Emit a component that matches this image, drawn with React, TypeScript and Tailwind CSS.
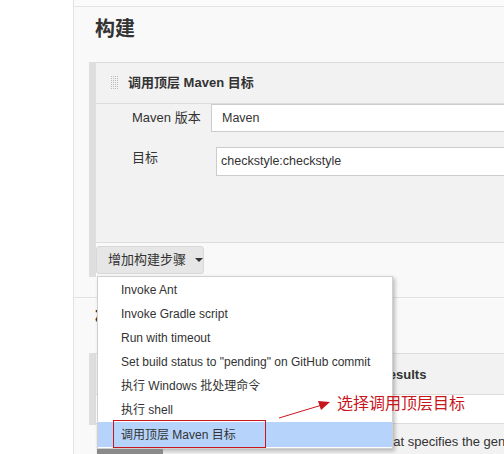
import React from "react";

const font = { fontFamily: '"Liberation Sans", Arial, "Noto Sans CJK SC", sans-serif' };

const menuItems = [
  "Invoke Ant",
  "Invoke Gradle script",
  "Run with timeout",
  'Set build status to "pending" on GitHub commit',
  "执行 Windows 批处理命令",
  "执行 shell",
  "调用顶层 Maven 目标",
];

function Grip() {
  return (
    <svg width="9" height="14" viewBox="0 0 9 14" className="shrink-0">
      {[0, 1, 2, 3, 4, 5, 6].map((r) =>
        [0, 1, 2, 3].map((c) => (
          <rect key={`${r}-${c}`} x={c * 2 + 1} y={r * 2} width="1" height="1" fill="#bbb" />
        ))
      )}
    </svg>
  );
}

export default function App() {
  return (
    <div
      className="relative w-[504px] h-[454px] overflow-hidden bg-white text-[13px] text-[#333]"
      style={font}
    >
      <div className="flex h-full">
        {/* left empty column */}
        <div className="w-[73px] shrink-0 bg-white" />

        {/* main panel */}
        <div className="flex-1 border-l border-[#e2e2e2] bg-[#f9f9f9] flex flex-col overflow-hidden">
          <div className="shrink-0 h-[7px] bg-[#fbfbfb] border-b border-[#e4e4e4]" />

          {/* 构建 */}
          <div className="shrink-0 pl-[21px] pt-[9px] h-[55px]">
            <h2 className="text-[20px] font-bold leading-[26px] text-[#333]">构建</h2>
          </div>

          {/* build step */}
          <div className="shrink-0 flex pl-[15px]">
            <div className="w-[7px] bg-[#dedede] shrink-0" />
            <div className="flex-1">
              <div className="h-[181px] bg-[#f2f2f2] border-t border-b border-[#dcdcdc]">
                <div className="h-[41px] flex items-center gap-[9px] pl-[14px] border-b border-[#dcdcdc]">
                  <Grip />
                  <span className="font-bold text-[13px]">调用顶层 Maven 目标</span>
                </div>
                <div className="flex items-center h-[28px]">
                  <span className="w-[115px] pl-[36px] text-[13px] text-[#333]">Maven 版本</span>
                  <div className="flex-1 h-[28px] bg-white border border-[#ccc] border-r-0 flex items-center pl-[10px] text-[12.5px]">
                    Maven
                  </div>
                </div>
                <div className="flex items-center mt-[15px] h-[29px]">
                  <span className="w-[120px] pl-[36px] text-[13px] -mt-[8px]">目标</span>
                  <div className="flex-1 h-[29px] bg-white border border-[#ccc] border-r-0 flex items-center pl-[4px] text-[12.5px]">
                    checkstyle:checkstyle
                  </div>
                </div>
              </div>
              <div className="h-[34px] pt-[3px]">
                <button className="h-[28px] w-[108px] rounded-[3px] bg-[#e6e6e6] border border-[#d8d8d8] flex items-center pl-[11px] text-[13px] text-[#333] whitespace-nowrap">
                  增加构建步骤
                  <span className="ml-[9px] border-l-[4px] border-r-[4px] border-t-[4px] border-l-transparent border-r-transparent border-t-[#333]" />
                </button>
              </div>
            </div>
          </div>

          {/* post-build section */}
          <div className="shrink-0 mt-[20px] border-t border-[#e2e2e2]">
            <div className="pl-[21px] pt-[6px] h-[55px]">
              <h2 className="text-[20px] font-bold leading-[26px]">构建后操作</h2>
            </div>
            <div className="flex pl-[15px]">
              <div className="w-[7px] bg-[#dedede] shrink-0 h-[72px]" />
              <div className="flex-1 bg-[#f2f2f2] border-t border-[#dcdcdc]">
                <div className="h-[41px] flex items-center pl-[110px] pt-[1px] border-b border-[#dcdcdc]">
                  <span className="font-bold text-[13px] whitespace-nowrap">Publish Checkstyle analysis results</span>
                </div>
                <div className="h-[29px] bg-white border-b border-[#dcdcdc]" />
                <div className="h-[34px] flex items-center pl-[191px] pt-[2px] whitespace-nowrap text-[13px]">
                  Ant glob pattern that specifies the generated result files
                </div>
              </div>
            </div>
          </div>
        </div>
      </div>

      {/* dropdown menu */}
      <div className="absolute left-[97px] top-[276px] w-[296px] h-[173px] bg-white border border-[#d0d0d0] shadow-[2px_2px_4px_rgba(0,0,0,0.25)] pt-[1px]">
        {menuItems.map((item, i) => (
          <div
            key={item}
            className={
              "h-[24px] flex items-center pl-[23px] text-[12px] text-[#333] whitespace-nowrap " +
              (i === menuItems.length - 1 ? "bg-[#b5d3fb] h-[25px]" : "")
            }
          >
            {item}
          </div>
        ))}
      </div>
      <div className="absolute left-[97px] top-[449px] w-[66px] h-[5px] bg-[#8a8a8a]" />

      {/* annotation */}
      <div className="absolute left-[113px] top-[420px] w-[153px] h-[28px] border border-[#c8161d]" />
      <svg className="absolute left-0 top-0" width="504" height="454">
        <line x1="279" y1="418" x2="322" y2="405" stroke="#c8161d" strokeWidth="1" />
        <polygon points="330,402 318,401 321,410" fill="#c8161d" />
      </svg>
      <div
        className="absolute left-[337px] top-[391px] text-[16px] leading-[22px] text-[#c8161d] whitespace-nowrap"
        style={{ fontFamily: '"Noto Sans CJK SC", sans-serif' }}
      >
        选择调用顶层目标
      </div>
    </div>
  );
}
